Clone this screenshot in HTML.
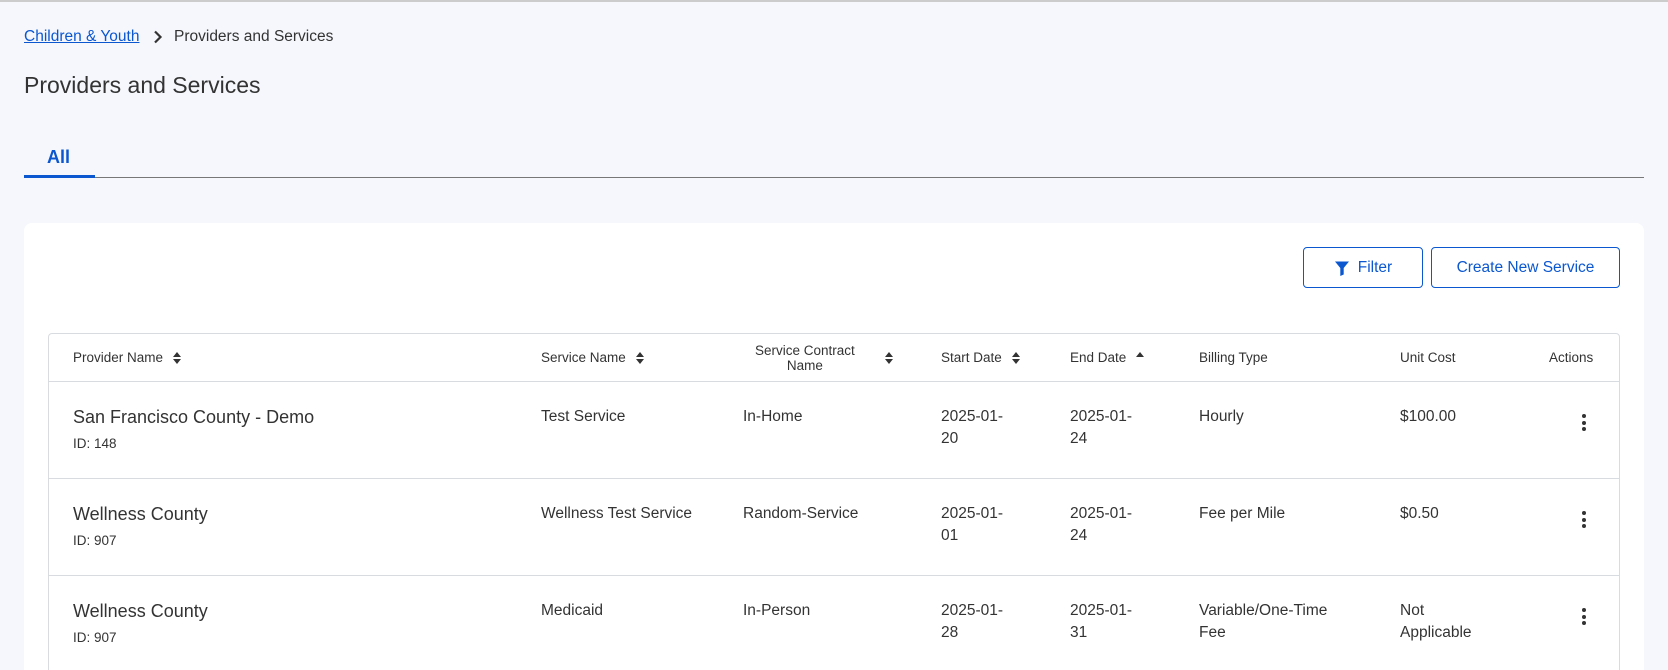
<!DOCTYPE html>
<html><head><style>
*{margin:0;padding:0;box-sizing:border-box}
html{width:1668px;height:670px;overflow:hidden}
body{width:1668px;height:670px;overflow:hidden;background:#f5f7fc;font-family:"Liberation Sans",sans-serif;color:#333;position:relative}
.a{position:absolute;white-space:nowrap}
.card{position:absolute;left:24px;top:223px;width:1620px;height:447px;background:#fff;border-radius:8px 8px 0 0}
.tbl{position:absolute;left:48px;top:333px;width:1572px;height:345px;border:1px solid #d8dbe0;border-radius:4px}
.hl{position:absolute;left:48px;width:1572px;height:1px;background:#d8dbe0}
.h{font-size:13.5px;color:#333}
.t{font-size:15.5px;line-height:22px}
.btn{position:absolute;top:247px;height:41px;border:1.5px solid #0b57d0;border-radius:4px;color:#0b57d0;font-size:15.5px;display:flex;align-items:center;justify-content:center;background:#fff}
.s{display:inline-block;margin-left:6px;vertical-align:middle}
.dots{position:absolute;width:4px}
.dots i{display:block;width:4px;height:4px;border-radius:2px;background:#333;margin-bottom:2.5px}
</style></head><body>
<div class="a" style="left:0;top:0;width:1668px;height:2px;background:#ccc"></div>
<div class="a" style="left:24px;top:28px;font-size:15.5px;color:#0b57d0;text-decoration:underline">Children &amp; Youth</div>
<svg class="a" style="left:153px;top:30px" width="10" height="14" viewBox="0 0 10 14"><path d="M2 1.5l5.5 5.5-5.5 5.5" stroke="#333" stroke-width="2.2" fill="none"/></svg>
<div class="a" style="left:174px;top:28px;font-size:15.5px;color:#333">Providers and Services</div>
<div class="a" style="left:24px;top:72px;font-size:23px;color:#333">Providers and Services</div>
<div class="a" style="left:47px;top:147px;font-size:18px;font-weight:bold;color:#0b57d0">All</div>
<div class="a" style="left:24px;top:177px;width:1620px;height:1px;background:#777"></div>
<div class="a" style="left:24px;top:175px;width:71px;height:3px;background:#0b57d0"></div>
<div class="card"></div>
<div class="btn" style="left:1303px;width:120px"><svg width="16" height="16" viewBox="0 0 16 16" style="margin-right:8px"><path d="M1 1.5h14l-5.3 6.5v6.5l-3.4 1.5v-8z" fill="#0b57d0"/></svg>Filter</div>
<div class="btn" style="left:1431px;width:189px">Create New Service</div>
<div class="tbl"></div>
<div class="hl" style="top:381px"></div>
<div class="hl" style="top:478px"></div>
<div class="hl" style="top:575px"></div>
<svg width="0" height="0" style="position:absolute"><defs><g id="srt"><path d="M0 5L4 0 8 5z M0 7l4 5 4-5z" fill="#333"/></g><g id="up"><path d="M0 5L4 0 8 5z" fill="#333"/></g></defs></svg>
<div class="a h" style="left:73px;top:350px">Provider Name <svg class="s" width="8" height="12"><use href="#srt"/></svg></div>
<div class="a h" style="left:541px;top:350px">Service Name <svg class="s" width="8" height="12"><use href="#srt"/></svg></div>
<div class="a h" style="left:755px;top:343px;text-align:center;line-height:15px">Service Contract<br>Name</div>
<svg class="a" style="left:885px;top:352px" width="8" height="12"><use href="#srt"/></svg>
<div class="a h" style="left:941px;top:350px">Start Date <svg class="s" width="8" height="12"><use href="#srt"/></svg></div>
<div class="a h" style="left:1070px;top:350px">End Date <svg class="s" width="8" height="12"><use href="#up"/></svg></div>
<div class="a h" style="left:1199px;top:350px">Billing Type</div>
<div class="a h" style="left:1400px;top:350px">Unit Cost</div>
<div class="a h" style="left:1549px;top:350px">Actions</div>

<div class="a" style="left:73px;top:407px;font-size:18px">San Francisco County - Demo</div>
<div class="a" style="left:73px;top:436px;font-size:13.5px">ID: 148</div>
<div class="a t" style="left:541px;top:406px">Test Service</div>
<div class="a t" style="left:743px;top:406px">In-Home</div>
<div class="a t" style="left:941px;top:406px">2025-01-<br>20</div>
<div class="a t" style="left:1070px;top:406px">2025-01-<br>24</div>
<div class="a t" style="left:1199px;top:406px">Hourly</div>
<div class="a t" style="left:1400px;top:406px">$100.00</div>
<div class="dots" style="left:1582px;top:414px"><i></i><i></i><i></i></div>

<div class="a" style="left:73px;top:504px;font-size:18px">Wellness County</div>
<div class="a" style="left:73px;top:533px;font-size:13.5px">ID: 907</div>
<div class="a t" style="left:541px;top:503px">Wellness Test Service</div>
<div class="a t" style="left:743px;top:503px">Random-Service</div>
<div class="a t" style="left:941px;top:503px">2025-01-<br>01</div>
<div class="a t" style="left:1070px;top:503px">2025-01-<br>24</div>
<div class="a t" style="left:1199px;top:503px">Fee per Mile</div>
<div class="a t" style="left:1400px;top:503px">$0.50</div>
<div class="dots" style="left:1582px;top:511px"><i></i><i></i><i></i></div>

<div class="a" style="left:73px;top:601px;font-size:18px">Wellness County</div>
<div class="a" style="left:73px;top:630px;font-size:13.5px">ID: 907</div>
<div class="a t" style="left:541px;top:600px">Medicaid</div>
<div class="a t" style="left:743px;top:600px">In-Person</div>
<div class="a t" style="left:941px;top:600px">2025-01-<br>28</div>
<div class="a t" style="left:1070px;top:600px">2025-01-<br>31</div>
<div class="a t" style="left:1199px;top:600px">Variable/One-Time<br>Fee</div>
<div class="a t" style="left:1400px;top:600px">Not<br>Applicable</div>
<div class="dots" style="left:1582px;top:608px"><i></i><i></i><i></i></div>
</body></html>
